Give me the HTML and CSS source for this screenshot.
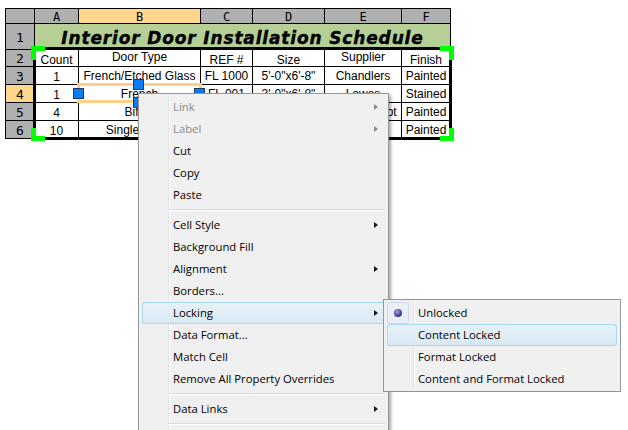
FILE: index.html
```html
<!DOCTYPE html>
<html lang="en">
<head>
<meta charset="utf-8">
<title>Interior Door Installation Schedule</title>
<link rel="stylesheet" href="styles.css">
</head>
<body>
<div class="sheet">
  <div class="corner cell head"></div>
  <div class="cell head col">A</div>
  <div class="cell head col active">B</div>
  <div class="cell head col">C</div>
  <div class="cell head col">D</div>
  <div class="cell head col">E</div>
  <div class="cell head col">F</div>

  <div class="cell head rownum">1</div>
  <div class="cell title">Interior Door Installation Schedule</div>

  <div class="cell head rownum">2</div>
  <div class="cell low">Count</div>
  <div class="cell high">Door Type</div>
  <div class="cell low">REF #</div>
  <div class="cell low">Size</div>
  <div class="cell high">Supplier</div>
  <div class="cell low">Finish</div>

  <div class="cell head rownum">3</div>
  <div class="cell low">1</div>
  <div class="cell">French/Etched Glass</div>
  <div class="cell">FL 1000</div>
  <div class="cell">5'-0"x6'-8"</div>
  <div class="cell">Chandlers</div>
  <div class="cell">Painted</div>

  <div class="cell head rownum active">4</div>
  <div class="cell low">1</div>
  <div class="cell">French</div>
  <div class="cell">FL 001</div>
  <div class="cell">3'-0"x6'-8"</div>
  <div class="cell">Lowes</div>
  <div class="cell">Stained</div>

  <div class="cell head rownum">5</div>
  <div class="cell low">4</div>
  <div class="cell">Bifold</div>
  <div class="cell">BF 300</div>
  <div class="cell">2'-0"x6'-8"</div>
  <div class="cell">Home Depot</div>
  <div class="cell">Painted</div>

  <div class="cell head rownum">6</div>
  <div class="cell low">10</div>
  <div class="cell">Single Panel</div>
  <div class="cell">SG 200</div>
  <div class="cell">2'-6"x6'-8"</div>
  <div class="cell">Lowes</div>
  <div class="cell">Painted</div>

  <div class="frame"></div>
  <span class="grip grip-tl"></span>
  <span class="grip grip-tr"></span>
  <span class="grip grip-bl"></span>
  <span class="grip grip-br"></span>
  <div class="selection"></div>
  <span class="handle handle-l"></span>
  <span class="handle handle-t"></span>
  <span class="handle handle-r"></span>
  <span class="handle handle-b"></span>
</div>

<div class="menu main-menu">
  <div class="item disabled">Link<i class="arrow"></i></div>
  <div class="item disabled">Label<i class="arrow"></i></div>
  <div class="item">Cut</div>
  <div class="item">Copy</div>
  <div class="item">Paste</div>
  <div class="sep"></div>
  <div class="item">Cell Style<i class="arrow"></i></div>
  <div class="item">Background Fill</div>
  <div class="item">Alignment<i class="arrow"></i></div>
  <div class="item">Borders...</div>
  <div class="item hot">Locking<i class="arrow"></i></div>
  <div class="item">Data Format...</div>
  <div class="item">Match Cell</div>
  <div class="item">Remove All Property Overrides</div>
  <div class="sep"></div>
  <div class="item">Data Links<i class="arrow"></i></div>
  <div class="sep"></div>
</div>

<div class="menu sub-menu">
  <div class="item checked"><span class="check"><b class="dot"></b></span>Unlocked</div>
  <div class="item hot">Content Locked</div>
  <div class="item">Format Locked</div>
  <div class="item">Content and Format Locked</div>
</div>
</body>
</html>
```

FILE: styles.css
```css
html, body {
  margin: 0;
  height: 100%;
  overflow: hidden;
  background: #fff;
}

body {
  position: relative;
  padding: 8px 0 0 5px;
  box-sizing: border-box;
}

.sheet {
  position: relative;
  display: grid;
  grid-template-columns: 29px 44px 122px 52px 72px 77px 49px;
  grid-template-rows: 15px 26px 17px 18px 18px 18px 18px;
  width: 446px;
  box-sizing: border-box;
  border-top: 1px solid #000;
  border-left: 1px solid #000;
  font: 12px/1 "Liberation Sans", Arial, sans-serif;
  color: #000;
}

.cell {
  display: flex;
  align-items: center;
  justify-content: center;
  box-sizing: border-box;
  border-right: 1px solid #000;
  border-bottom: 1px solid #000;
  white-space: nowrap;
  overflow: hidden;
  padding-top: 1px;
}

.head { background: #b0b0b0; }
.active { background: #ffd68c; }
.col, .rownum { font-family: "DejaVu Sans Mono", monospace; }
.rownum { font-size: 13px; }
.low { padding-top: 3px; }
.high { padding-top: 0; padding-bottom: 2px; }

.title {
  grid-column: 2 / span 6;
  background: #b5cf96;
  padding-top: 4px;
  font: italic bold 17px/1 "DejaVu Sans", sans-serif;
  letter-spacing: 0.85px;
  -webkit-text-stroke: 0.4px #000;
}

.frame {
  position: absolute;
  left: 27px;
  top: 38px;
  width: 419px;
  height: 93px;
  box-sizing: border-box;
  border: 3px solid #000;
}

.grip {
  position: absolute;
  width: 14px;
  height: 14px;
  box-sizing: border-box;
  border: 0 solid #00ff00;
}
.grip-tl { left: 25px; top: 37px; border-width: 5px 0 0 5px; }
.grip-tr { left: 434px; top: 37px; border-width: 5px 5px 0 0; }
.grip-bl { left: 25px; top: 119px; border-width: 0 0 5px 5px; height: 13px; }
.grip-br { left: 434px; top: 119px; border-width: 0 5px 5px 0; height: 13px; }

.selection {
  position: absolute;
  left: 71px;
  top: 74px;
  width: 125px;
  height: 20px;
  box-sizing: border-box;
  border: 3px solid #fdd08a;
}

.handle {
  position: absolute;
  width: 11px;
  height: 11px;
  box-sizing: border-box;
  border: 1px solid #1c3a5c;
  background: #0a7cf5;
}
.handle-l { left: 67px; top: 79px; }
.handle-t { left: 127px; top: 70px; }
.handle-r { left: 188px; top: 79px; }
.handle-b { left: 127px; top: 88px; }

.menu {
  position: absolute;
  box-sizing: border-box;
  border: 1px solid #979797;
  background: #f0f0f0;
  font: 11.3px/22px "Open Sans", "Noto Sans", sans-serif;
  color: #000;
}

.menu::before {
  content: "";
  position: absolute;
  left: 29px;
  top: 2px;
  bottom: 2px;
  width: 1px;
  background: #e2e3e3;
  border-right: 1px solid #fff;
}

.main-menu {
  left: 138px;
  top: 93px;
  width: 251px;
  height: 350px;
  padding: 2px 3px;
  box-shadow: 2px 2px 3px rgba(0, 0, 0, 0.35);
}

.sub-menu {
  left: 383px;
  top: 299px;
  width: 238px;
  height: 93px;
  padding: 2px 3px;
}

.item {
  position: relative;
  height: 22px;
  padding-left: 31px;
  white-space: nowrap;
  box-sizing: border-box;
}

.sep {
  position: relative;
  height: 8px;
  margin-left: 26px;
}
.sep::after {
  content: "";
  position: absolute;
  left: 0;
  right: 0;
  top: 3px;
  height: 1px;
  background: #dcdcdc;
  border-bottom: 1px solid #fff;
}

.disabled { color: #8c8c8c; }
.disabled .arrow { border-left-color: #8c8c8c; }

.hot {
  border-radius: 3px;
  box-shadow: inset 0 0 0 1px #a9d9f1;
  background: linear-gradient(#e8f2f8, #d8e9f4);
}

.arrow {
  position: absolute;
  right: 7px;
  top: 8px;
  width: 0;
  height: 0;
  border-style: solid;
  border-width: 3.5px 0 3.5px 4px;
  border-color: transparent transparent transparent #1a1a1a;
}

.check {
  position: absolute;
  left: 0;
  top: 0;
  display: flex;
  align-items: center;
  justify-content: center;
  width: 22px;
  height: 22px;
  box-sizing: border-box;
  border: 1px solid #cddaf0;
  border-radius: 3px;
  background: #e9eef8;
}

.dot {
  width: 8px;
  height: 8px;
  border-radius: 50%;
  background: radial-gradient(circle at 40% 35%, #a5a5e0, #303080 70%);
}
```
